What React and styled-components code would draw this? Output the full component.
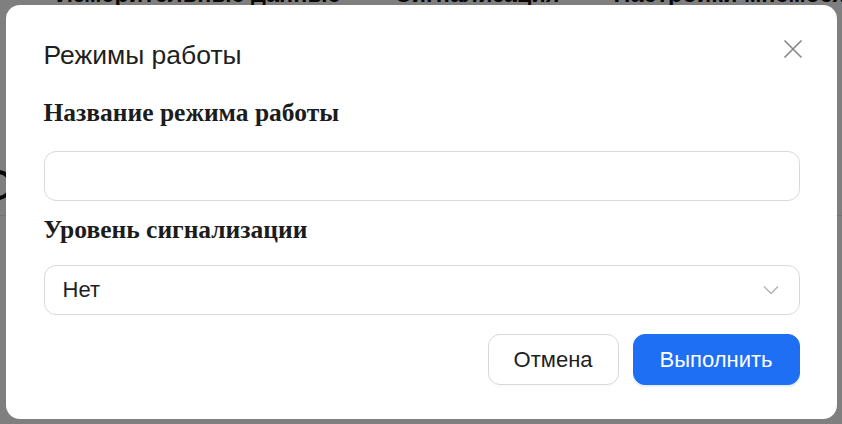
import React from 'react';
import styled, { createGlobalStyle } from 'styled-components';

const GlobalStyle = createGlobalStyle`
  html, body {
    margin: 0;
    padding: 0;
    background: #fff;
    overflow: hidden;
  }
  body {
    font-family: "Liberation Sans", Arial, sans-serif;
    color: #1f1f1f;
  }
`;

// page that sits behind the dialog
const Page = styled.div`
  width: 842px;
  height: 424px;
  overflow: hidden;
`;

const TabBar = styled.div`
  display: flex;
  gap: 54px;
  padding-left: 56px;
  margin-top: -20px;
  font-size: 23.5px;
  font-weight: 700;
  line-height: 28px;
  color: #111;
  white-space: nowrap;
`;

const PageRow = styled.div`
  display: flex;
  align-items: center;
  height: 60px;
  margin-top: 147px;
  margin-left: -17px;
  border-bottom: 1px solid #e6e6e6;
`;

const RowDot = styled.div`
  width: 22px;
  height: 22px;
  border-radius: 50%;
  border: 4px solid #111;
`;

const Overlay = styled.div`
  position: fixed;
  inset: 0;
  background: rgba(0, 0, 0, 0.5);
  display: flex;
  align-items: center;
  justify-content: center;
`;

const Dialog = styled.div`
  width: 831px;
  height: 414px;
  box-sizing: border-box;
  background: #fff;
  border-radius: 14px;
  padding: 34px 37px 32px 38px;
  display: flex;
  flex-direction: column;
`;

const Header = styled.div`
  display: flex;
  justify-content: space-between;
  align-items: flex-start;
  margin-bottom: 27px;
`;

const Title = styled.div`
  font-size: 26.5px;
  line-height: 32px;
  color: #1f1f1f;
`;

const CloseButton = styled.button`
  width: 20px;
  height: 20px;
  padding: 0;
  margin-right: -3px;
  border: none;
  background: none;
  cursor: pointer;
  color: #858585;
  display: flex;
`;

const Label = styled.div`
  font-family: "Liberation Serif", "Times New Roman", serif;
  font-weight: 700;
  font-size: 25.5px;
  line-height: 30px;
  color: #1c1c1c;
  margin-bottom: ${p => p.$gap}px;
`;

const Field = styled.div`
  height: 50px;
  box-sizing: border-box;
  border: 1px solid #d9d9d9;
  border-radius: 12px;
  background: #fff;
  margin-bottom: ${p => p.$gap}px;
  display: flex;
  align-items: center;
  justify-content: space-between;
  padding: 0 20px 0 18px;
`;

const FieldText = styled.span`
  font-size: 22px;
  color: #1f1f1f;
`;

const Chevron = styled.svg`
  width: 16px;
  height: 10px;
  color: #b3b3b3;
`;

const Actions = styled.div`
  display: flex;
  justify-content: flex-end;
  gap: 14px;
`;

const Button = styled.button`
  height: 51px;
  padding: 0 ${p => (p.$primary ? 26 : 25)}px;
  border-radius: 12px;
  font-family: "Liberation Sans", Arial, sans-serif;
  font-size: 22px;
  cursor: pointer;
  border: 1px solid ${p => (p.$primary ? '#1f6ff5' : '#d9d9d9')};
  background: ${p => (p.$primary ? '#1f6ff5' : '#fff')};
  color: ${p => (p.$primary ? '#fff' : '#1f1f1f')};
  box-shadow: ${p => (p.$primary ? '0 2px 0 rgba(5, 100, 255, 0.1)' : '0 2px 0 rgba(0, 0, 0, 0.02)')};
`;

export default function App() {
  return (
    <>
      <GlobalStyle />
      <Page>
        <TabBar>
          <span>Измерительные данные</span>
          <span>Сигнализация</span>
          <span>Настройки мнемосхемы</span>
        </TabBar>
        <PageRow>
          <RowDot />
        </PageRow>
      </Page>
      <Overlay>
        <Dialog>
          <Header>
            <Title>Режимы работы</Title>
            <CloseButton aria-label="Закрыть">
              <svg width="20" height="20" viewBox="0 0 20 20" fill="none" stroke="currentColor" strokeWidth="1.6">
                <path d="M1.5 1.5 L18.5 18.5 M18.5 1.5 L1.5 18.5" />
              </svg>
            </CloseButton>
          </Header>
          <Label $gap={23}>Название режима работы</Label>
          <Field $gap={14} />
          <Label $gap={20}>Уровень сигнализации</Label>
          <Field $gap={19}>
            <FieldText>Нет</FieldText>
            <Chevron viewBox="0 0 16 10" fill="none" stroke="currentColor" strokeWidth="1.4">
              <path d="M1 1.5 L8 8.5 L15 1.5" />
            </Chevron>
          </Field>
          <Actions>
            <Button>Отмена</Button>
            <Button $primary>Выполнить</Button>
          </Actions>
        </Dialog>
      </Overlay>
    </>
  );
}
